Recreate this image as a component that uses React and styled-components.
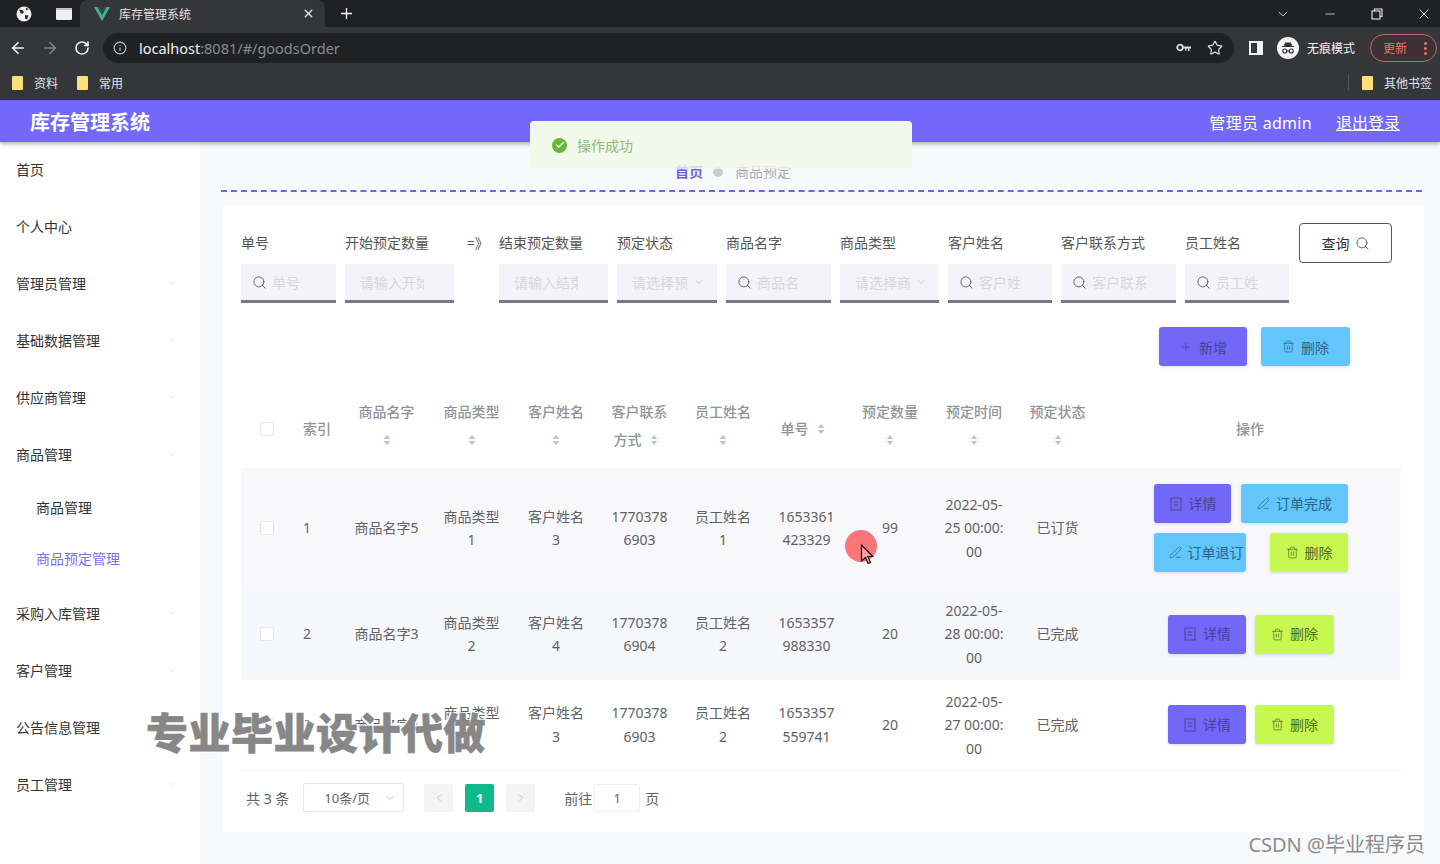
import styled, { createGlobalStyle } from "styled-components";
import {
  ArrowLeft,
  ArrowRight,
  Check,
  ChevronDown,
  ChevronLeft,
  ChevronRight,
  Info,
  Minus,
  PenLine,
  Plus,
  RotateCw,
  Search,
  Star,
  Trash2,
  X,
} from "lucide-react";

const GlobalStyle = createGlobalStyle`
  html, body {
    margin: 0;
    padding: 0;
    height: 100%;
    overflow: hidden;
    background: #f8f9fb;
    font-family: "Noto Sans", "Noto Sans CJK SC", sans-serif;
  }
  * { box-sizing: border-box; }
`;

const Page = styled.div`
  position: relative;
  width: 1440px;
  height: 864px;
  overflow: hidden;
  display: flex;
  flex-direction: column;
`;

/* browser chrome */
const TabBar = styled.div`
  height: 27px;
  background: #202124;
  display: flex;
  align-items: stretch;
  color: #fff;
`;

const TabIcon = styled.div`
  width: ${(p) => p.$w || 40}px;
  display: flex;
  align-items: center;
  justify-content: center;
`;

const ActiveTab = styled.div`
  width: 245px;
  background: #35363a;
  border-radius: 8px 8px 0 0;
  display: flex;
  align-items: center;
  padding: 0 10px 0 14px;
  font-size: 12px;
  color: #e3e3e3;
`;

const TabTitle = styled.span`
  flex: 1;
  margin-left: 9px;
`;

const WindowButtons = styled.div`
  margin-left: auto;
  margin-right: -7px;
  display: flex;
  align-items: center;
  color: #e8e8e8;
`;

const WindowButton = styled.div`
  width: 47px;
  display: flex;
  justify-content: center;
`;

const Toolbar = styled.div`
  height: 42px;
  background: #35363a;
  display: flex;
  align-items: center;
  padding: 0 3px 0 2px;
  color: #e8eaed;
`;

const NavButton = styled.div`
  width: 32px;
  display: flex;
  justify-content: center;
  color: ${(p) => (p.$dim ? "#85878a" : "#f1f3f4")};
`;

const UrlPill = styled.div`
  width: 1132px;
  height: 30px;
  margin-left: 5px;
  border-radius: 15px;
  background: #202124;
  display: flex;
  align-items: center;
  padding: 0 11px 0 10px;
`;

const UrlText = styled.div`
  flex: 1;
  margin-left: 12px;
  font-size: 14.5px;
  color: #8a8d91;
  white-space: nowrap;
`;

const UrlHost = styled.span`
  color: #f1f3f4;
`;

const PillIcons = styled.div`
  display: flex;
  align-items: center;
  gap: 16px;
  color: #dadce0;
`;

const PanelIcon = styled.div`
  width: 14px;
  height: 14px;
  margin-left: 15px;
  border: 2px solid #f1f3f4;
  border-right-width: 6px;
`;

const Incognito = styled.div`
  display: flex;
  align-items: center;
  margin-left: 14px;
  gap: 8px;
  font-size: 12px;
  color: #f1f3f4;
  width: 82px;
  white-space: nowrap;
`;

const UpdatePill = styled.div`
  width: 67px;
  height: 28px;
  margin-left: 11px;
  border: 1px solid #b46f6c;
  border-radius: 14px;
  background: #3d3135;
  color: #ea7468;
  font-size: 12px;
  display: flex;
  align-items: center;
  justify-content: space-between;
  padding: 0 9px 0 12px;
`;

const Dots = styled.span`
  width: 3px;
  height: 3px;
  border-radius: 50%;
  background: #ea7468;
  box-shadow: 0 -5px 0 #ea7468, 0 5px 0 #ea7468;
`;

const Bookmarks = styled.div`
  height: 31px;
  background: #35363a;
  display: flex;
  align-items: center;
  padding: 0 8px 4px 12px;
  font-size: 12px;
  color: #e3e3e3;
`;

const Bookmark = styled.div`
  display: flex;
  align-items: center;
  gap: 11px;
  margin-right: 19px;
`;

const Folder = styled.span`
  display: block;
  width: 11px;
  height: 14px;
  background: #fbdf7a;
  border-radius: 1px;
`;

const BookmarkDivider = styled.span`
  width: 1px;
  height: 16px;
  margin: 0 13px 0 auto;
  background: #55575b;
`;

const OtherBookmarks = styled(Bookmark)`
  margin-right: 0;
`;

/* app header */
const Header = styled.header`
  position: relative;
  z-index: 1;
  height: 42px;
  flex: none;
  background: #7468fb;
  border-top: 1px solid #6a5ce0;
  box-shadow: 0 2px 4px rgba(40, 40, 60, 0.35);
  color: #fff;
  display: flex;
  align-items: center;
  justify-content: space-between;
  padding: 0 40px 0 30px;
`;

const AppTitle = styled.h1`
  margin: 0;
  font-size: 20px;
  font-weight: 700;
`;

const HeaderRight = styled.div`
  display: flex;
  gap: 24px;
  font-size: 16px;
`;

const AdminName = styled.span`
  letter-spacing: 0.3px;
`;

const Logout = styled.span`
  text-decoration: underline;
`;

const Body = styled.div`
  flex: 1;
  display: flex;
  min-height: 0;
`;

const Sidebar = styled.nav`
  width: 200px;
  flex: none;
  background: #fff;
`;

const NavItem = styled.div`
  height: ${(p) => (p.$sub ? 51 : 57)}px;
  display: flex;
  align-items: center;
  justify-content: space-between;
  padding: 0 22px ${(p) => (p.$sub ? 6 : 3)}px ${(p) => (p.$sub ? 36 : 16)}px;
  font-size: 14px;
  color: ${(p) => (p.$active ? "#7b6ff0" : "#333")};
`;

const NavChevron = styled(ChevronDown)`
  color: #ebebf0;
`;

const Main = styled.main`
  flex: 1;
  min-width: 0;
  padding: 0 18px 0 21px;
  background: #f8f9fb;
`;

const BreadBar = styled.div`
  height: 50px;
  padding: 21px 0 0 454px;
  border-bottom: 2px dashed #6d62e8;
  display: flex;
  align-items: flex-start;
  font-size: 14px;
  line-height: 18px;
`;

const BreadHome = styled.span`
  color: #6d62e8;
  font-weight: 700;
`;

const BreadDot = styled.span`
  width: 10px;
  height: 10px;
  margin: 4px 12px 0 10px;
  border-radius: 50%;
  background: #c9c9d4;
`;

const BreadCurrent = styled.span`
  color: #a8a8b8;
`;

const Card = styled.section`
  margin: 13px -2px 0 2px;
  padding: 18px 23px 20px 18px;
  background: #fff;
`;

/* search form */
const FormRow = styled.div`
  display: flex;
  gap: 9px;
  align-items: flex-start;
`;

const Field = styled.div`
  width: ${(p) => p.$w}px;
  flex: none;
`;

const FieldLabel = styled.div`
  height: 41px;
  line-height: 40px;
  font-size: 14px;
  color: #555;
  white-space: nowrap;
`;

const InputBox = styled.div`
  height: 39px;
  display: flex;
  align-items: center;
  padding: 0 ${(p) => p.$pr || 30}px 0 ${(p) => (p.$icon ? 11 : 15)}px;
  background: #f4f3f9;
  border-bottom: 3px solid #7c7888;
  color: #4a4a55;
`;

const FieldIcon = styled(Search)`
  flex: none;
`;

const TextInput = styled.input`
  flex: 1;
  min-width: 0;
  margin-left: ${(p) => (p.$icon ? 5 : 0)}px;
  padding: 0;
  border: 0;
  outline: 0;
  background: transparent;
  font: inherit;
  font-size: 14px;
  &::placeholder {
    color: #d6d6e0;
    opacity: 1;
  }
`;

const SelectText = styled.span`
  flex: 1;
  min-width: 0;
  overflow: hidden;
  white-space: nowrap;
  font-size: 14px;
  color: #d6d6e0;
`;

const SelectArrow = styled(ChevronDown)`
  flex: none;
  margin-left: 5px;
  color: #c8c8d4;
`;

const QueryButton = styled.button`
  width: 93px;
  height: 40px;
  margin-left: 1px;
  display: flex;
  align-items: center;
  justify-content: center;
  gap: 5px;
  border: 1px solid #55555c;
  border-radius: 4px;
  background: #fff;
  color: #333;
  font: inherit;
  font-size: 14px;
`;

const ActionBar = styled.div`
  margin-top: 24px;
  padding-right: 51px;
  display: flex;
  justify-content: flex-end;
  gap: 14px;
`;

const tones = {
  purple: { bg: "#7268f8", fg: "#464392" },
  blue: { bg: "#62c6fd", fg: "#2a6386" },
  lime: { bg: "#c6f84f", fg: "#4c6b24" },
};

const ActionButton = styled.button`
  width: ${(p) => p.$w}px;
  height: 39px;
  flex: none;
  display: flex;
  align-items: center;
  justify-content: center;
  gap: 6px;
  padding: 0 0 0 ${(p) => p.$pl || 0}px;
  border: 0;
  border-radius: 3px;
  background: ${(p) => tones[p.$tone].bg};
  color: ${(p) => tones[p.$tone].fg};
  font: inherit;
  font-size: 14px;
  white-space: nowrap;
  box-shadow: 0 1px 3px rgba(120, 120, 160, 0.25);
`;

/* table */
const Table = styled.table`
  width: 1160px;
  margin-top: 24px;
  border-collapse: collapse;
  table-layout: fixed;
  border-bottom: 1px solid #f6f6f9;
`;

const Th = styled.th`
  height: 78px;
  padding: 0 10px ${(p) => (p.$raised ? 6 : 0)}px;
  font-size: 14px;
  font-weight: 500;
  line-height: 28px;
  color: #909399;
  text-align: ${(p) => (p.$left ? "left" : "center")};
  word-break: break-all;
`;

const Tr = styled.tr`
  height: ${(p) => p.$h}px;
  background: ${(p) => p.$bg};
`;

const Td = styled.td`
  padding: 0 ${(p) => (p.$wide ? 5 : 11)}px;
  font-size: 14px;
  line-height: 23.5px;
  color: #606266;
  text-align: ${(p) => (p.$left ? "left" : "center")};
  word-break: break-all;
`;

const IndexCell = styled(Td)`
  padding-left: 10px;
`;

const CheckBox = styled.span`
  display: block;
  width: 14px;
  height: 14px;
  margin-left: ${(p) => p.$ml}px;
  border: 1px solid #e6e6ec;
  border-radius: 2px;
  background: #fff;
`;

const Caret = styled.svg`
  display: inline-block;
  width: 24px;
  height: 12px;
  vertical-align: -1px;
`;

const ButtonStack = styled.div`
  margin-left: 2px;
  display: flex;
  flex-direction: column;
  align-items: center;
  gap: 10px;
`;

const ButtonLine = styled.div`
  width: ${(p) => p.$w}px;
  display: flex;
  justify-content: space-between;
`;

/* pagination */
const Pager = styled.div`
  margin-top: 13px;
  padding-left: 5px;
  height: 28px;
  display: flex;
  align-items: center;
  font-size: 14px;
  color: #606266;
`;

const PageSize = styled.div`
  width: 101px;
  height: 29px;
  margin: 0 20px 0 14px;
  padding: 0 7px 0 20px;
  border: 1px solid #e4e7ed;
  border-radius: 2px;
  font-size: 13px;
  display: flex;
  align-items: center;
  justify-content: space-between;
`;

const PageBtn = styled.div`
  width: 29px;
  height: 28px;
  margin-right: 12px;
  display: flex;
  align-items: center;
  justify-content: center;
  border-radius: 2px;
  font-size: 13px;
  font-weight: 700;
  background: ${(p) => (p.$active ? "#10b98a" : "#f4f4f5")};
  color: ${(p) => (p.$active ? "#fff" : "#c0c4cc")};
`;

const GoLabel = styled.span`
  margin-left: ${(p) => p.$ml || 0}px;
`;

const GoInput = styled.div`
  width: 46px;
  height: 28px;
  margin: 0 5px 0 2px;
  display: flex;
  align-items: center;
  justify-content: center;
  border: 1px solid #eef0f4;
  border-radius: 2px;
  font-size: 13px;
`;

/* overlays */
const Toast = styled.div`
  position: absolute;
  left: 530px;
  top: 121px;
  width: 382px;
  height: 48px;
  padding: 0 22px;
  display: flex;
  align-items: center;
  gap: 10px;
  border-radius: 4px 4px 0 0;
  background: linear-gradient(#f1f9e9 70%, rgba(241, 249, 233, 0.75));
  color: #8fb97c;
  font-size: 14px;
  z-index: 2;
`;

const ToastIcon = styled.span`
  width: 15px;
  height: 15px;
  border-radius: 50%;
  background: #67b83a;
  color: #fff;
  display: flex;
  align-items: center;
  justify-content: center;
`;

const Watermark = styled.div`
  position: absolute;
  left: 146px;
  top: 701px;
  font-family: "Noto Sans CJK SC", sans-serif;
  font-size: 42px;
  line-height: 60px;
  font-weight: 900;
  letter-spacing: 0.5px;
  color: #878787;
  white-space: nowrap;
  -webkit-text-stroke: 0.6px #878787;
  text-shadow: 1.5px 1.5px 0 #fff, -1.5px -1.5px 0 #fff, 1.5px -1.5px 0 #fff, -1.5px 1.5px 0 #fff;
  z-index: 3;
`;

const CsdnMark = styled.div`
  position: absolute;
  right: 15px;
  top: 831px;
  font-size: 20px;
  line-height: 28px;
  color: #8c8c8c;
  white-space: nowrap;
  z-index: 3;
`;

const ClickDot = styled.div`
  position: absolute;
  left: 845px;
  top: 530px;
  width: 32px;
  height: 32px;
  border-radius: 50%;
  background: #f8757a;
  z-index: 3;
`;

const Pointer = styled.svg`
  position: absolute;
  left: 860px;
  top: 544px;
  z-index: 4;
`;

const navItems = [
  { label: "首页" },
  { label: "个人中心" },
  { label: "管理员管理", arrow: true },
  { label: "基础数据管理", arrow: true },
  { label: "供应商管理", arrow: true },
  { label: "商品管理", arrow: true },
  { label: "商品管理", sub: true },
  { label: "商品预定管理", sub: true, active: true },
  { label: "采购入库管理", arrow: true },
  { label: "客户管理", arrow: true },
  { label: "公告信息管理", arrow: true },
  { label: "员工管理", arrow: true },
];

const fields = [
  { label: "单号", w: 95, search: true, ph: "单号", pr: 30 },
  { label: "开始预定数量", w: 109, ph: "请输入开始预定数量", pr: 30 },
  { label: "=》", w: 27, arrow: true },
  { label: "结束预定数量", w: 109, ph: "请输入结束预定数量", pr: 30 },
  { label: "预定状态", w: 100, select: true, ph: "请选择预定状态" },
  { label: "商品名字", w: 105, search: true, ph: "商品名字", pr: 32 },
  { label: "商品类型", w: 99, select: true, ph: "请选择商品类型" },
  { label: "客户姓名", w: 104, search: true, ph: "客户姓名", pr: 32 },
  { label: "客户联系方式", w: 115, search: true, ph: "客户联系方式", pr: 30 },
  { label: "员工姓名", w: 104, search: true, ph: "员工姓名", pr: 32 },
];

const colWidths = [52, 51, 85, 85, 84, 83, 84, 83, 84, 84, 83, 302];
const sortable = ["商品名字", "商品类型", "客户姓名", "客户联系方式", "员工姓名", "单号", "预定数量", "预定时间", "预定状态"];

const rows = [
  {
    h: 120, bg: "#f8f8fb", idx: 1, name: "商品名字5", type: "商品类型1", customer: "客户姓名3", phone: "17703786903",
    staff: "员工姓名1", no: "1653361423329", qty: 99, time: "2022-05-25 00:00:00", status: "已订货", booked: true,
  },
  {
    h: 92, bg: "#f6f7fb", idx: 2, name: "商品名字3", type: "商品类型2", customer: "客户姓名4", phone: "17703786904",
    staff: "员工姓名2", no: "1653357988330", qty: 20, time: "2022-05-28 00:00:00", status: "已完成",
  },
  {
    h: 90, bg: "#fff", idx: 3, name: "商品名字2", type: "商品类型2", customer: "客户姓名3", phone: "17703786903",
    staff: "员工姓名2", no: "1653357559741", qty: 20, time: "2022-05-27 00:00:00", status: "已完成",
  },
];

const SortCaret = () => (
  <Caret viewBox="0 0 24 12">
    <path d="M12 1l3.500 4h-7zM12 11l-3.500-4h7z" fill="#c0c4cc" />
  </Caret>
);

const TicketIcon = () => (
  <svg width="14" height="14" viewBox="0 0 14 14" fill="none" stroke="currentColor" strokeWidth="1">
    <rect x="2" y="1" width="10" height="12" />
    <path d="M4.500 5h5M4.500 8h5" />
  </svg>
);

const GlobeIcon = () => (
  <svg width="16" height="16" viewBox="0 0 16 16">
    <circle cx="8" cy="8" r="7.500" fill="#f4f4f4" />
    <path d="M3 3.500l3 .5 2 2-1.500 2L4.500 7zM9 9l3.500.5-1.500 4-2-1zM9.500 1.500l3 1.500-2 1.500z" fill="#26272a" />
  </svg>
);

const VueLogo = () => (
  <svg width="16" height="14" viewBox="0 0 16 14">
    <path d="M0 0h3.500L8 8l4.500-8H16L8 14z" fill="#41b883" />
    <path d="M3.500 0H6l2 3.500L10 0h2.500L8 8z" fill="#35495e" />
  </svg>
);

const KeyIcon = () => (
  <svg width="15" height="10" viewBox="0 0 15 10">
    <circle cx="4" cy="4.500" r="2.800" fill="none" stroke="#dadce0" strokeWidth="1.800" />
    <path d="M7 3.500h8v2h-1.500v2.500H12V5.500h-1.500V7.500H9V5.500H7z" fill="#dadce0" />
  </svg>
);

const IncognitoIcon = () => (
  <svg width="22" height="22" viewBox="0 0 22 22">
    <circle cx="11" cy="11" r="11" fill="#f6f6f6" />
    <path d="M8 5.500h6l1 3.500h2v1H5V9h2z" fill="#303134" />
    <circle cx="7.800" cy="14" r="2" fill="none" stroke="#303134" strokeWidth="1.200" />
    <circle cx="14.200" cy="14" r="2" fill="none" stroke="#303134" strokeWidth="1.200" />
    <path d="M9.800 14h2.400" stroke="#303134" />
  </svg>
);

const Actions = ({ booked }) =>
  booked ? (
    <ButtonStack>
      <ButtonLine $w={194}>
        <ActionButton $tone="purple" $w={77}><TicketIcon />详情</ActionButton>
        <ActionButton $tone="blue" $w={107}><PenLine size={13} strokeWidth={1.3} />订单完成</ActionButton>
      </ButtonLine>
      <ButtonLine $w={194}>
        <ActionButton $tone="blue" $w={92} $pl={12}><PenLine size={13} strokeWidth={1.3} />订单退订</ActionButton>
        <ActionButton $tone="lime" $w={78}><Trash2 size={13} strokeWidth={1.3} />删除</ActionButton>
      </ButtonLine>
    </ButtonStack>
  ) : (
    <ButtonStack>
      <ButtonLine $w={166}>
        <ActionButton $tone="purple" $w={78}><TicketIcon />详情</ActionButton>
        <ActionButton $tone="lime" $w={79}><Trash2 size={13} strokeWidth={1.3} />删除</ActionButton>
      </ButtonLine>
    </ButtonStack>
  );

const FormField = ({ field }) => {
  if (field.arrow) {
    return (
      <Field $w={field.w}>
        <FieldLabel>&nbsp;{field.label}</FieldLabel>
      </Field>
    );
  }
  return (
    <Field $w={field.w}>
      <FieldLabel>{field.label}</FieldLabel>
      {field.select ? (
        <InputBox $pr={12}>
          <SelectText>{field.ph}</SelectText>
          <SelectArrow size={12} />
        </InputBox>
      ) : (
        <InputBox $icon={field.search} $pr={field.pr}>
          {field.search && <FieldIcon size={15} strokeWidth={1.3} />}
          <TextInput $icon={field.search} placeholder={field.ph} readOnly />
        </InputBox>
      )}
    </Field>
  );
};

const App = () => {
  return (
    <Page>
      <GlobalStyle />
      <TabBar>
        <TabIcon $w={48}><GlobeIcon /></TabIcon>
        <TabIcon $w={32}>
          <svg width="16" height="12" viewBox="0 0 16 12">
            <rect width="16" height="12" rx="1" fill="#efefef" />
            <rect width="16" height="2" fill="#bdbdbd" />
          </svg>
        </TabIcon>
        <ActiveTab>
          <VueLogo />
          <TabTitle>库存管理系统</TabTitle>
          <X size={13} strokeWidth={2.5} />
        </ActiveTab>
        <TabIcon $w={42}><Plus size={17} strokeWidth={1.8} /></TabIcon>
        <WindowButtons>
          <WindowButton><ChevronDown size={16} strokeWidth={1.2} /></WindowButton>
          <WindowButton><Minus size={14} strokeWidth={1.4} /></WindowButton>
          <WindowButton>
            <svg width="12" height="12" viewBox="0 0 12 12" fill="none" stroke="currentColor" strokeWidth="1.100">
              <rect x="1" y="3" width="8" height="8" />
              <path d="M3.500 3V1H11v7.500H9" />
            </svg>
          </WindowButton>
          <WindowButton><X size={16} strokeWidth={1.4} /></WindowButton>
        </WindowButtons>
      </TabBar>
      <Toolbar>
        <NavButton><ArrowLeft size={18} strokeWidth={2.2} /></NavButton>
        <NavButton $dim><ArrowRight size={18} strokeWidth={2.2} /></NavButton>
        <NavButton><RotateCw size={16} strokeWidth={2.4} /></NavButton>
        <UrlPill>
          <Info size={14} color="#c6c8cb" />
          <UrlText><UrlHost>localhost</UrlHost>:8081/#/goodsOrder</UrlText>
          <PillIcons>
            <KeyIcon />
            <Star size={16} strokeWidth={1.8} />
          </PillIcons>
        </UrlPill>
        <PanelIcon />
        <Incognito><IncognitoIcon />无痕模式</Incognito>
        <UpdatePill>更新<Dots /></UpdatePill>
      </Toolbar>
      <Bookmarks>
        <Bookmark><Folder />资料</Bookmark>
        <Bookmark><Folder />常用</Bookmark>
        <BookmarkDivider />
        <OtherBookmarks><Folder />其他书签</OtherBookmarks>
      </Bookmarks>
      <Header>
        <AppTitle>库存管理系统</AppTitle>
        <HeaderRight>
          <AdminName>管理员 admin</AdminName>
          <Logout>退出登录</Logout>
        </HeaderRight>
      </Header>
      <Body>
        <Sidebar>
          {navItems.map((item, i) => (
            <NavItem key={i} $sub={item.sub} $active={item.active}>
              {item.label}
              {item.arrow && <NavChevron size={12} />}
            </NavItem>
          ))}
        </Sidebar>
        <Main>
          <BreadBar>
            <BreadHome>首页</BreadHome>
            <BreadDot />
            <BreadCurrent>商品预定</BreadCurrent>
          </BreadBar>
          <Card>
            <FormRow>
              {fields.map((field) => (
                <FormField key={field.label} field={field} />
              ))}
              <QueryButton>查询<Search size={15} strokeWidth={1.2} /></QueryButton>
            </FormRow>
            <ActionBar>
              <ActionButton $tone="purple" $w={88}><Plus size={14} strokeWidth={1.2} />新增</ActionButton>
              <ActionButton $tone="blue" $w={89}><Trash2 size={13} strokeWidth={1.3} />删除</ActionButton>
            </ActionBar>
            <Table>
              <colgroup>
                {colWidths.map((w, i) => (
                  <col key={i} width={w} />
                ))}
              </colgroup>
              <thead>
                <tr>
                  <Th $left><CheckBox $ml={9} /></Th>
                  <Th $left>索引</Th>
                  {sortable.map((title) => (
                    <Th key={title} $raised={title !== "单号"}>{title}<SortCaret /></Th>
                  ))}
                  <Th>操作</Th>
                </tr>
              </thead>
              <tbody>
                {rows.map((row) => (
                  <Tr key={row.idx} $h={row.h} $bg={row.bg}>
                    <Td $left><CheckBox $ml={8} /></Td>
                    <IndexCell $left>{row.idx}</IndexCell>
                    <Td $wide>{row.name}</Td>
                    <Td>{row.type}</Td>
                    <Td>{row.customer}</Td>
                    <Td>{row.phone}</Td>
                    <Td>{row.staff}</Td>
                    <Td>{row.no}</Td>
                    <Td>{row.qty}</Td>
                    <Td>{row.time}</Td>
                    <Td>{row.status}</Td>
                    <Td><Actions booked={row.booked} /></Td>
                  </Tr>
                ))}
              </tbody>
            </Table>
            <Pager>
              共 3 条
              <PageSize>10条/页<ChevronDown size={12} color="#c0c4cc" /></PageSize>
              <PageBtn><ChevronLeft size={12} /></PageBtn>
              <PageBtn $active>1</PageBtn>
              <PageBtn><ChevronRight size={12} /></PageBtn>
              <GoLabel $ml={17}>前往</GoLabel>
              <GoInput>1</GoInput>
              <GoLabel>页</GoLabel>
            </Pager>
          </Card>
        </Main>
      </Body>
      <Toast>
        <ToastIcon><Check size={10} strokeWidth={3} /></ToastIcon>
        操作成功
      </Toast>
      <Watermark>专业毕业设计代做</Watermark>
      <CsdnMark>CSDN @毕业程序员</CsdnMark>
      <ClickDot />
      <Pointer width="14" height="22" viewBox="0 0 14 22">
        <path d="M1.500 1v16l4-3.500 2.500 6 2.500-1-2.500-6h5z" fill="#f8a0a0" stroke="#111" strokeWidth="1.200" />
      </Pointer>
    </Page>
  );
};

export default App;
